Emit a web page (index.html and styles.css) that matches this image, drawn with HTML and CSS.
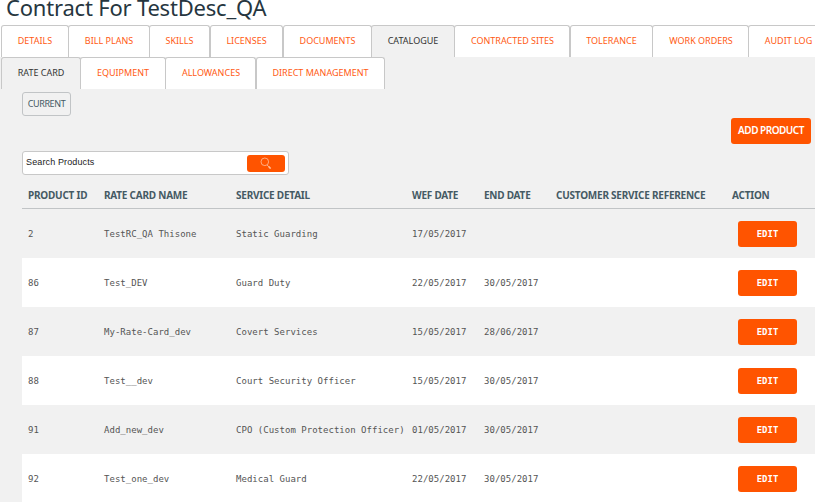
FILE: index.html
```html
<!DOCTYPE html>
<html lang="en">
<head>
<meta charset="utf-8">
<title>Contract For TestDesc_QA</title>
<link rel="stylesheet" href="styles.css">
</head>
<body>
<h1>Contract For TestDesc_QA</h1>
<nav class="tabs main-tabs">
<a>DETAILS</a><a>BILL PLANS</a><a>SKILLS</a><a>LICENSES</a><a>DOCUMENTS</a><a class="active">CATALOGUE</a><a>CONTRACTED SITES</a><a>TOLERANCE</a><a>WORK ORDERS</a><a>AUDIT LOG</a>
</nav>
<main>
<nav class="tabs sub-tabs">
<a class="active">RATE CARD</a><a>EQUIPMENT</a><a>ALLOWANCES</a><a>DIRECT MANAGEMENT</a>
</nav>
<section class="content">
<button class="current">CURRENT</button>
<button class="add">ADD PRODUCT</button>
<div class="search"><span>Search Products</span><button aria-label="Search"><svg width="12" height="13" viewBox="0 0 12 13"><circle cx="4.8" cy="4.8" r="3.8"/><path d="M7.2 8 10.3 11.6"/><path class="handle" d="M8.7 9.4 10.6 11.6"/></svg></button></div>
<div class="row head"><span>PRODUCT ID</span><span>RATE CARD NAME</span><span>SERVICE DETAIL</span><span>WEF DATE</span><span>END DATE</span><span>CUSTOMER SERVICE REFERENCE</span><span>ACTION</span></div>
<div class="row"><span>2</span><span>TestRC_QA Thisone</span><span>Static Guarding</span><span>17/05/2017</span><span></span><span></span><button>EDIT</button></div>
<div class="row"><span>86</span><span>Test_DEV</span><span>Guard Duty</span><span>22/05/2017</span><span>30/05/2017</span><span></span><button>EDIT</button></div>
<div class="row"><span>87</span><span>My-Rate-Card_dev</span><span>Covert Services</span><span>15/05/2017</span><span>28/06/2017</span><span></span><button>EDIT</button></div>
<div class="row"><span>88</span><span>Test__dev</span><span>Court Security Officer</span><span>15/05/2017</span><span>30/05/2017</span><span></span><button>EDIT</button></div>
<div class="row"><span>91</span><span>Add_new_dev</span><span>CPO (Custom Protection Officer)</span><span>01/05/2017</span><span>30/05/2017</span><span></span><button>EDIT</button></div>
<div class="row"><span>92</span><span>Test_one_dev</span><span>Medical Guard</span><span>22/05/2017</span><span>30/05/2017</span><span></span><button>EDIT</button></div>
</section>
</main>
</body>
</html>
```
FILE: styles.css
```css
* { box-sizing: border-box; }
body {
  margin: 0;
  height: 502px;
  overflow: hidden;
  background: #fff;
  font-family: "Noto Sans", sans-serif;
}
h1 {
  margin: 0;
  height: 25px;
  padding-left: 6px;
  font-size: 22px;
  line-height: 15px;
  font-weight: 400;
  letter-spacing: -0.2px;
  color: #263640;
  white-space: nowrap;
}
button { border: 0; padding: 0; font-family: inherit; }
.tabs { display: flex; height: 32px; padding-left: 1px; overflow: hidden; }
.tabs a {
  flex: none;
  height: 32px;
  border: 1px solid #c8c8c8;
  border-bottom: 0;
  border-radius: 3px 3px 0 0;
  background: #fff;
  color: #ff5a14;
  font-size: 9px;
  line-height: 30px;
  text-align: center;
  white-space: nowrap;
  margin-right: -1px;
}
.tabs .active { background: #f1f1f1; color: #333; }
.main-tabs a:nth-child(1) { width: 68px; }
.main-tabs a:nth-child(2) { width: 82px; }
.main-tabs a:nth-child(3) { width: 61px; margin-right: 0; }
.main-tabs a:nth-child(4) { width: 73px; margin-right: 0; }
.main-tabs a:nth-child(5) { width: 89px; }
.main-tabs a:nth-child(6) { width: 84px; }
.main-tabs a:nth-child(7) { width: 116px; margin-right: 0; padding-left: 1px; }
.main-tabs a:nth-child(8) { width: 83px; }
.main-tabs a:nth-child(9) { width: 97px; padding-left: 1px; }
.main-tabs a:nth-child(10) { width: 81px; }
.sub-tabs a:nth-child(1) { width: 80px; }
.sub-tabs a:nth-child(2) { width: 86px; }
.sub-tabs a:nth-child(3) { width: 91px; margin-right: 0; padding-left: 1px; }
.sub-tabs a:nth-child(4) { width: 129px; }
main { height: 445px; background: #f1f1f1; }
.content { display: flex; flex-direction: column; padding: 3px 0 0 22px; }
.current {
  width: 49px;
  height: 24px;
  padding-bottom: 1px;
  border: 1px solid #c1c4c6;
  border-radius: 3px;
  background: #f1f1f1;
  color: #455a64;
  font-size: 9px;
  letter-spacing: -0.4px;
}
.add {
  align-self: flex-end;
  width: 80px;
  height: 26px;
  margin: 2px 4px 0 0;
  padding-bottom: 2px;
  border-radius: 3px;
  background: #ff5400;
  color: #fff;
  font-size: 10px;
  font-weight: 600;
  letter-spacing: -0.5px;
}
.search {
  display: flex;
  justify-content: space-between;
  width: 267px;
  height: 24px;
  margin-top: 7px;
  padding: 3px 3px 0;
  border: 1px solid #c8c8c8;
  border-radius: 3px;
  background: #fff;
  color: #222;
  font: 9px/14px "Liberation Sans", sans-serif;
  letter-spacing: 0.13px;
}
.search button {
  display: flex;
  align-items: center;
  justify-content: center;
  width: 38px;
  height: 17px;
  border-radius: 3px;
  background: #ff5400;
}
.search svg { fill: none; stroke: #ffc19f; stroke-width: 0.8; }
.search .handle { stroke-width: 1.5; }
.row {
  display: grid;
  grid-template-columns: 76px 132px 176px 72px 72px 176px 1fr;
  align-items: center;
  height: 49px;
  padding-left: 6px;
  color: #555;
  font: 9px "DejaVu Sans Mono", monospace;
  letter-spacing: 0.02px;
  white-space: nowrap;
}
.row:nth-child(even) { background: #fff; }
.row button {
  width: 59px;
  height: 26px;
  margin-left: 6px;
  border-radius: 3px;
  background: #ff5400;
  color: #fff;
  font-size: 9px;
  font-weight: 700;
}
.row.head {
  height: 34px;
  padding-top: 6px;
  border-bottom: 1px solid #c1c4c6;
  background: none;
  color: #455a64;
  font: 700 10px "Noto Sans", sans-serif;
  letter-spacing: -0.23px;
}
```
